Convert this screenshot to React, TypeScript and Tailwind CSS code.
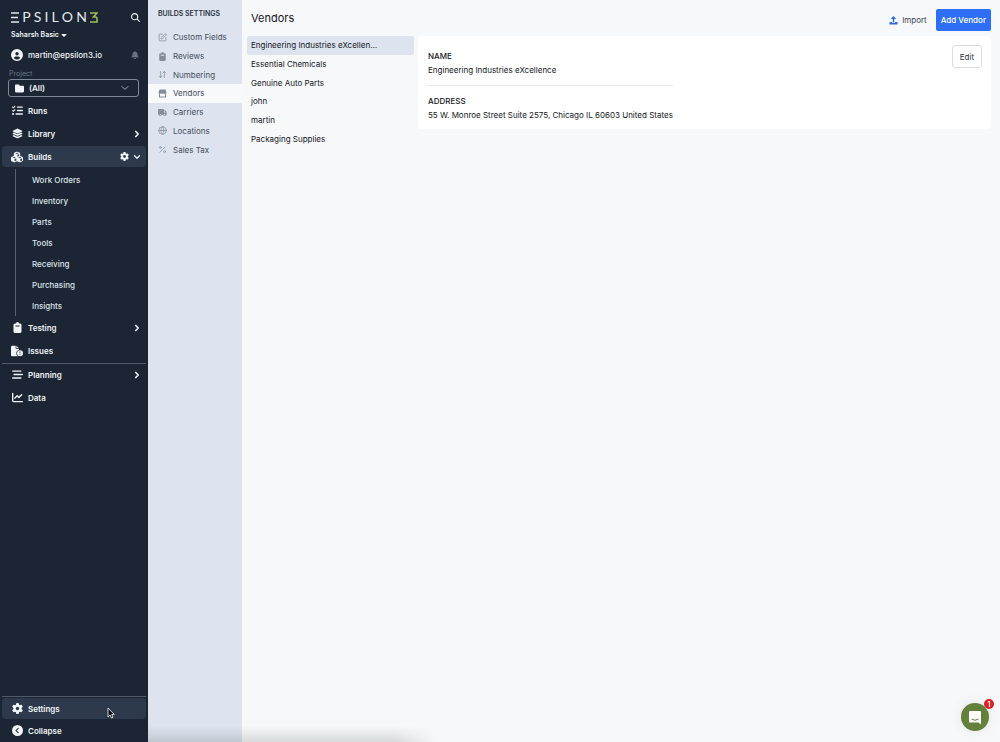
import React from "react";
import {
  FaBell,
  FaCaretDown,
  FaChartLine,
  FaCircleChevronLeft,
  FaCircleUser,
  FaCubes,
  FaFileCircleExclamation,
  FaFolder,
  FaGear,
  FaLayerGroup,
  FaListCheck,
  FaMagnifyingGlass,
  FaTruck,
  FaBarsStaggered,
} from "react-icons/fa6";
import { Globe, Percent, SquarePen, ArrowDownUp, ChevronDown, ChevronRight } from "lucide-react";

function Logo() {
  return (
    <div role="img" aria-label="Epsilon3" className="flex h-3 w-[87px] items-center justify-between font-['Lato'] text-[14px] leading-3 text-[#e4e8ee]">
      <svg width="8" height="11" viewBox="0 0 8 11" stroke="currentColor" fill="none">
        <path d="M0 1H8M0 5.500H7M0 10H8" strokeWidth="1.500" />
      </svg>
      <span>P</span>
      <span>S</span>
      <span>I</span>
      <span>L</span>
      <span>O</span>
      <span>N</span>
      <svg width="8" height="11" viewBox="0 0 8 11" stroke="#9bbf52" fill="none">
        <path d="M0 1H7L3.500 5H5.500Q7 5 7 6.500V10H0" strokeWidth="1.600" />
      </svg>
    </div>
  );
}

function ClipboardIcon() {
  return (
    <svg width="11" height="11" viewBox="0 0 22 22" fill="currentColor">
      <path
        fillRule="evenodd"
        d="M8 3Q8 0 11 0T14 3H16Q19 3 19 6V19Q19 22 16 22H6Q3 22 3 19V6Q3 3 6 3ZM7 7V9H15V7Z"
      />
    </svg>
  );
}

function StoreIcon() {
  return (
    <svg width="9" height="9" viewBox="0 0 18 18" fill="currentColor">
      <path fillRule="evenodd" d="M3 1H15L17 7Q17 8.500 16 9V17H2V9Q1 8.500 1 7ZM4 9.500V15H14V9.500Z" />
    </svg>
  );
}

function UploadIcon() {
  return (
    <svg width="9" height="9" viewBox="0 0 18 18" fill="#2f6bea">
      <path d="M9 0 14.500 6H10.500V13H7.500V6H3.500ZM1 12H6V14H12V12H17V17H1Z" />
    </svg>
  );
}

type NavProps = {
  icon: React.ReactNode;
  label: string;
  active?: boolean;
  children?: React.ReactNode;
};

function NavItem({ icon, label, active, children }: NavProps) {
  return (
    <div className={`flex h-[21px] items-center rounded-sm pr-1 pl-[9px] ${active ? "bg-[#2c3a4b]" : ""}`}>
      <a href="#" className="flex flex-1 items-center gap-[5px] font-semibold">
        <span className="flex w-3 justify-center text-[11px]">{icon}</span>
        {label}
      </a>
      <div className="flex items-center gap-[3px]">{children}</div>
    </div>
  );
}

function Expand({ label, open }: { label: string; open?: boolean }) {
  return (
    <button type="button" aria-label={label}>
      {open ? <ChevronDown size={10} strokeWidth={3} /> : <ChevronRight size={10} strokeWidth={4} />}
    </button>
  );
}

const buildPages = ["Work Orders", "Inventory", "Parts", "Tools", "Receiving", "Purchasing", "Insights"];

function Sidebar() {
  return (
    <aside className="flex w-[148px] shrink-0 flex-col bg-[#1b2533] px-[2px] pb-px text-[8px] leading-3 text-[#f1f4f8]">
      <div className="flex items-center justify-between pt-[11px] pr-[6px] pl-[9px]">
        <Logo />
        <button type="button" aria-label="Search" className="text-[9px]">
          <FaMagnifyingGlass />
        </button>
      </div>
      <button type="button" className="mt-[6px] flex items-center gap-px self-start pl-[9px] text-[7px] leading-3 font-semibold">
        Saharsh Basic <FaCaretDown className="size-2" />
      </button>
      <div className="mt-2 flex items-center justify-between pr-[7px] pl-[9px]">
        <a href="#" className="flex items-center gap-[5px] font-medium">
          <FaCircleUser className="size-3" />
          martin@epsilon3.io
        </a>
        <button type="button" aria-label="Notifications" className="text-[8px] text-[#667183]">
          <FaBell />
        </button>
      </div>
      <label htmlFor="project" className="mt-2 pl-[7px] text-[7px] leading-[10px] text-[#6c7787]">
        Project
      </label>
      <div className="mr-[7px] ml-[6px] grid items-center">
        <select id="project" className="col-start-1 row-start-1 h-[18px] appearance-none rounded-[3px] border border-[#7f8a99] bg-transparent pl-5 font-semibold">
          <option>(All)</option>
        </select>
        <FaFolder className="pointer-events-none col-start-1 row-start-1 ml-[7px] size-[9px]" />
        <ChevronDown className="pointer-events-none col-start-1 row-start-1 mr-[8px] size-3 justify-self-end text-[#a3abb7]" strokeWidth={2} />
      </div>

      <nav aria-label="Main" className="mt-[3px] flex flex-1 flex-col gap-[2px]">
        <NavItem icon={<FaListCheck />} label="Runs" />
        <NavItem icon={<FaLayerGroup />} label="Library">
          <Expand label="Expand library" />
        </NavItem>
        <NavItem icon={<FaCubes className="size-3" />} label="Builds" active>
          <button type="button" aria-label="Builds settings" className="text-[9px]">
            <FaGear />
          </button>
          <Expand label="Collapse builds" open />
        </NavItem>
        <ul className="-mb-px ml-[13px] border-l border-[#566172] pl-4 text-[#dfe4ea]">
          {buildPages.map((page) => (
            <li key={page} className="flex h-[21px] items-center">
              <a href="#" className="font-medium">{page}</a>
            </li>
          ))}
        </ul>
        <NavItem icon={<ClipboardIcon />} label="Testing">
          <Expand label="Expand testing" />
        </NavItem>
        <NavItem icon={<FaFileCircleExclamation className="size-3" />} label="Issues" />
        <div className="border-t border-[#515c6b]">
          <NavItem icon={<FaBarsStaggered />} label="Planning">
            <Expand label="Expand planning" />
          </NavItem>
        </div>
        <NavItem icon={<FaChartLine />} label="Data" />
      </nav>
      <div className="flex flex-col gap-px border-t border-[#515c6b] pt-px">
        <NavItem icon={<FaGear />} label="Settings" active />
        <NavItem icon={<FaCircleChevronLeft />} label="Collapse" />
      </div>
    </aside>
  );
}

const settings = [
  { label: "Custom Fields", icon: <SquarePen /> },
  { label: "Reviews", icon: <ClipboardIcon /> },
  { label: "Numbering", icon: <ArrowDownUp /> },
  { label: "Vendors", icon: <StoreIcon /> },
  { label: "Carriers", icon: <FaTruck /> },
  { label: "Locations", icon: <Globe /> },
  { label: "Sales Tax", icon: <Percent /> },
];

function SettingsPanel() {
  return (
    <nav aria-label="Builds settings" className="w-[94px] shrink-0 bg-[#dde4ef] text-[8px] leading-3 text-[#454d5a]">
      <h2 className="pt-2 pl-[10px] text-[7px] leading-3 font-semibold text-[#2b3340]">BUILDS SETTINGS</h2>
      <ul className="mt-2 grid h-[131px] grid-rows-7">
        {settings.map(({ label, icon }) => (
          <li key={label} className={`flex items-center pl-[10px] ${label === "Vendors" ? "bg-[#f7f9fb]" : ""}`}>
            <a href="#" className="flex items-center gap-[6px] [&_svg]:size-[9px] [&_svg]:text-[#858d9a]">
              {icon}
              {label}
            </a>
          </li>
        ))}
      </ul>
    </nav>
  );
}

const vendors = [
  "Engineering Industries eXcellence",
  "Essential Chemicals",
  "Genuine Auto Parts",
  "john",
  "martin",
  "Packaging Supplies",
];

export default function App() {
  return (
    <div className="relative flex min-h-screen bg-[#f7f8fa] font-['Inter',sans-serif] text-[#14171c]">
      <Sidebar />
      <SettingsPanel />
      <main className="min-w-0 flex-1 pr-[9px] pl-[5px] text-[8px] leading-3">
        <header className="flex h-9 items-center justify-between pl-1">
          <h1 className="text-[11px] leading-4">Vendors</h1>
          <div className="flex items-center gap-[9px] pt-1">
            <button type="button" className="flex items-center gap-1 text-[#3c434f]">
              <UploadIcon />
              Import
            </button>
            <button type="button" className="h-[22px] rounded-xs bg-[#2f6ff5] px-[5px] font-medium text-white">
              Add Vendor
            </button>
          </div>
        </header>
        <div className="flex items-start gap-1">
          <ul className="grid h-[112px] w-[167px] shrink-0 grid-rows-6">
            {vendors.map((name, i) => (
              <li key={name} className={`flex items-center rounded-xs ${i === 0 ? "bg-[#dde4ef]" : ""}`}>
                <button type="button" className="w-[132px] truncate pl-1 text-left">
                  {name}
                </button>
              </li>
            ))}
          </ul>
          <section className="flex flex-1 items-start justify-between rounded-sm bg-white pt-[9px] pr-[9px] pb-2 pl-[10px]">
            <dl className="pt-[5px]">
              <dt className="font-medium">NAME</dt>
              <dd className="mt-[2px] border-b border-[#e6e8ec] pb-[9px]">Engineering Industries eXcellence</dd>
              <dt className="mt-[9px] font-medium">ADDRESS</dt>
              <dd className="mt-[2px]">55 W. Monroe Street Suite 2575, Chicago IL 60603 United States</dd>
            </dl>
            <button type="button" className="h-[23px] rounded-[3px] border border-[#d9dce1] px-[7px] text-[#2c323c]">
              Edit
            </button>
          </section>
        </div>
      </main>

      <div className="pointer-events-none absolute bottom-0 left-[148px] h-4 w-[290px] bg-linear-to-t from-black/12 to-transparent mask-r-from-85% mask-r-to-100%" />
      <svg className="pointer-events-none absolute bottom-[23px] left-[107px]" width="8" height="12" viewBox="0 0 8 12">
        <path d="M1 1V10L3 8L4.500 11L6 10.300L4.700 7.500H7.300Z" fill="#111" stroke="#dce1e8" strokeWidth="0.900" />
      </svg>
      <button
        type="button"
        aria-label="Open messages"
        className="absolute right-[11px] bottom-[11px] flex size-7 items-center justify-center rounded-full bg-[#64813b] shadow-[0_0_14px_rgba(0,0,0,0.08)]"
      >
        <svg width="14" height="15" viewBox="0 0 14 15">
          <path d="M2 1H12Q13 1 13 2V14.500L10.500 12.500H2Q1 12.500 1 11.500V2Q1 1 2 1Z" fill="#fff" />
          <path d="M3.500 9Q7 11.500 10.500 9" fill="none" stroke="#64813b" />
        </svg>
        <span className="absolute -top-1 -right-[5px] flex size-[10px] items-center justify-center rounded-full bg-[#dd1f26] text-[7px] leading-none font-semibold text-white">
          1
        </span>
      </button>
    </div>
  );
}
